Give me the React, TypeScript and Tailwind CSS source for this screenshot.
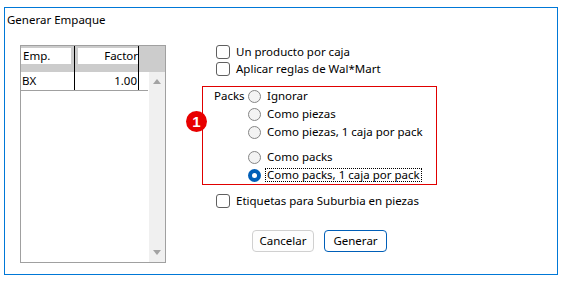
import React from 'react';

const FONT = "font-['Noto_Sans',_sans-serif]";

/**
 * Checkbox row, unchecked, Windows 11 look
 */
const CheckRow: React.FC<{ label: string; className?: string }> = ({ label, className = '' }) => (
  <div className={`flex items-center h-[17px] ${className}`}>
    <span className="w-[14px] h-[14px] rounded-[3px] border-[1.5px] border-[#5f5f5f] bg-white shrink-0" />
    <span className="ml-[6px] whitespace-nowrap">{label}</span>
  </div>
);

/**
 * Radio row; the checked one also gets the dotted focus rectangle
 */
const RadioRow: React.FC<{ label: string; checked?: boolean; className?: string }> = ({
  label,
  checked = false,
  className = '',
}) => (
  <div className={`flex items-center h-[18px] ${className}`}>
    {checked ? (
      <span className="w-[13px] h-[13px] rounded-full bg-[#005fb8] flex items-center justify-center shrink-0">
        <span className="w-[5px] h-[5px] rounded-full bg-white" />
      </span>
    ) : (
      <span className="w-[13px] h-[13px] rounded-full border border-[#858585] bg-[#f3f3f3] shrink-0" />
    )}
    <span
      className={`ml-[4px] px-[1px] whitespace-nowrap leading-[12px] ${
        checked ? 'border border-dotted border-black' : 'border border-transparent'
      }`}
    >
      {label}
    </span>
  </div>
);

/**
 * Packing grid with its header, one row and a vertical scroll bar
 */
const PackGrid: React.FC = () => (
  <div className="w-[146px] h-[218px] border border-[#a0a0a0] flex flex-col bg-white shrink-0">
    {/* Header */}
    <div className="h-[26px] bg-[#cccccc] flex items-start">
      <div className="w-[53px] h-full flex pt-[2px]">
        <div className="w-[50px] h-[16px] bg-white pl-[2px] leading-[16px]">Emp.</div>
      </div>
      <div className="w-px h-full bg-black" />
      <div className="w-[63px] h-full flex pt-[2px] pl-[3px]">
        <div className="w-[60px] h-[16px] bg-white text-right leading-[16px]">Factor</div>
      </div>
      <div className="w-px h-full bg-black" />
    </div>

    {/* Body */}
    <div className="flex-1 flex">
      <div className="flex-1">
        <div className="h-[19px] flex border-b border-[#a0a0a0] mr-[1px]">
          <div className="w-[53px] pl-[1px] leading-[18px]">BX</div>
          <div className="w-px bg-black" />
          <div className="w-[63px] text-right leading-[18px] pr-[1px]">1.00</div>
          <div className="w-px bg-black" />
        </div>
      </div>
      <div className="w-[16px] bg-[#f0f0f0] flex flex-col items-center justify-between py-[7px]">
        <svg width="8" height="5" viewBox="0 0 8 5">
          <path d="M0 5 L4 0 L8 5 Z" fill="#a3a3a3" />
        </svg>
        <svg width="8" height="5" viewBox="0 0 8 5">
          <path d="M0 0 L8 0 L4 5 Z" fill="#a3a3a3" />
        </svg>
      </div>
    </div>
  </div>
);

export default function App() {
  return (
    <div className={`w-[569px] h-[283px] bg-white text-black text-[11.5px] ${FONT}`}>
      <div className="ml-[4px] mt-[7px] w-[554px] h-[268px] border border-[#0078d7] flex flex-col">
        <div className="pl-[2px] pt-[4px] leading-[16px]">Generar Empaque</div>

        <div className="flex items-start ml-[15px] mt-[17px]">
          <PackGrid />

          <div className="ml-[36px] -mt-[2px] flex flex-col">
            <div className="pl-[14px]">
              <CheckRow label="Un producto por caja" />
              <CheckRow label="Aplicar reglas de Wal*Mart" />
            </div>

            {/* Highlighted packs option group */}
            <div className="relative mt-[9px] w-[235px] h-[99px] border border-[#e00000] flex pl-[11px]">
              <div className="w-[34px] h-[18px] leading-[18px]">Packs</div>
              <div className="flex flex-col">
                <RadioRow label="Ignorar" />
                <RadioRow label="Como piezas" />
                <RadioRow label="Como piezas, 1 caja por pack" />
                <RadioRow label="Como packs" className="mt-[7px]" />
                <RadioRow label="Como packs, 1 caja por pack" checked />
              </div>

              {/* Step badge */}
              <div className="absolute left-[-17px] top-[24px] w-[21px] h-[21px] rounded-full bg-[#e80000] flex items-center justify-center text-white font-bold text-[15px] leading-none font-['Liberation_Sans',_sans-serif]">
                1
              </div>
            </div>

            <CheckRow label="Etiquetas para Suburbia en piezas" className="pl-[14px] mt-[7px]" />

            <div className="flex gap-[10px] ml-[50px] mt-[21px]">
              <button className="w-[62px] h-[22px] rounded-[4px] border border-[#d0d0d0] bg-[#fdfdfd] leading-[20px]">
                Cancelar
              </button>
              <button className="w-[63px] h-[22px] rounded-[4px] border border-[#005fb8] bg-white leading-[20px]">
                Generar
              </button>
            </div>
          </div>
        </div>
      </div>
    </div>
  );
}
